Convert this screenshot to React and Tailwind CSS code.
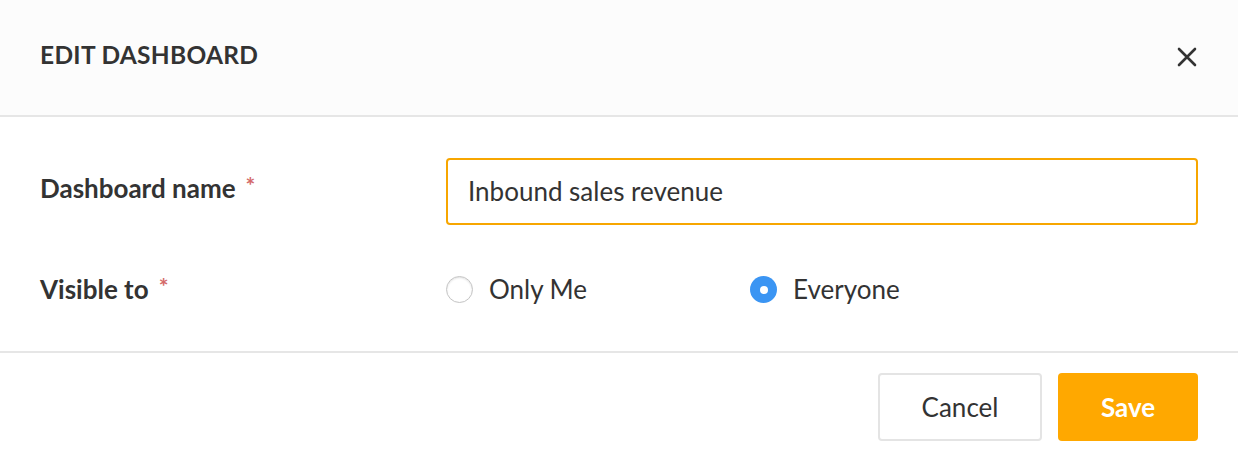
import React from "react";

export default function App() {
  return (
    <div className="w-[1238px] h-[460px] bg-white text-[#333333] overflow-hidden" style={{ fontFamily: "Lato, 'Open Sans', sans-serif" }}>
      <div className="h-[117px] bg-[#fcfcfc] border-b-2 border-[#e6e6e6] flex items-center justify-between pl-[40px] pr-[40px]">
        <h1 className="text-[24.5px] font-bold tracking-[0.3px] text-[#333333] -mt-[4px]">EDIT DASHBOARD</h1>
        <button className="w-[22px] h-[22px] flex items-center justify-center -mt-[2px]">
          <svg width="20" height="20" viewBox="0 0 20 20" fill="none" stroke="#333" strokeWidth="2.6" strokeLinecap="round">
            <path d="M2 2L18 18M18 2L2 18" />
          </svg>
        </button>
      </div>
      <div className="pt-[41px] pl-[40px] pr-[40px] h-[236px] border-b-2 border-[#e6e6e6]">
        <div className="flex items-center">
          <div className="w-[406px] text-[26px] font-bold -mt-[6px] flex items-start">
            <span>Dashboard name</span>
            <span className="text-[#d46a6a] text-[23px] font-bold ml-[10px] -mt-[1px]">*</span>
          </div>
          <div className="flex-1 h-[67px] border-2 border-[#f7a600] rounded-[4px] flex items-center pl-[20px] text-[26px] text-[#333]">
            Inbound sales revenue
          </div>
        </div>
        <div className="flex items-center mt-[45px]">
          <div className="w-[406px] text-[26px] font-bold flex items-start">
            <span>Visible to</span>
            <span className="text-[#d46a6a] text-[23px] font-bold ml-[10px] -mt-[1px]">*</span>
          </div>
          <div className="flex items-center w-[304px]">
            <span className="w-[27px] h-[27px] rounded-full border border-[#c4c4c4] bg-white shadow-[inset_0_1px_2px_rgba(0,0,0,0.12)]"></span>
            <span className="ml-[16px] text-[26px]">Only Me</span>
          </div>
          <div className="flex items-center">
            <span className="w-[27px] h-[27px] rounded-full bg-[#3b95f3] flex items-center justify-center">
              <span className="w-[8px] h-[8px] rounded-full bg-white"></span>
            </span>
            <span className="ml-[16px] text-[26px]">Everyone</span>
          </div>
        </div>
      </div>
      <div className="flex justify-end pr-[40px] pt-[20px] gap-[16px]">
        <button className="w-[164px] h-[68px] border-2 border-[#e4e4e4] rounded-[4px] bg-white text-[26px] text-[#333]">Cancel</button>
        <button className="w-[140px] h-[68px] rounded-[4px] bg-[#ffa800] text-[26px] font-bold text-white">Save</button>
      </div>
    </div>
  );
}
